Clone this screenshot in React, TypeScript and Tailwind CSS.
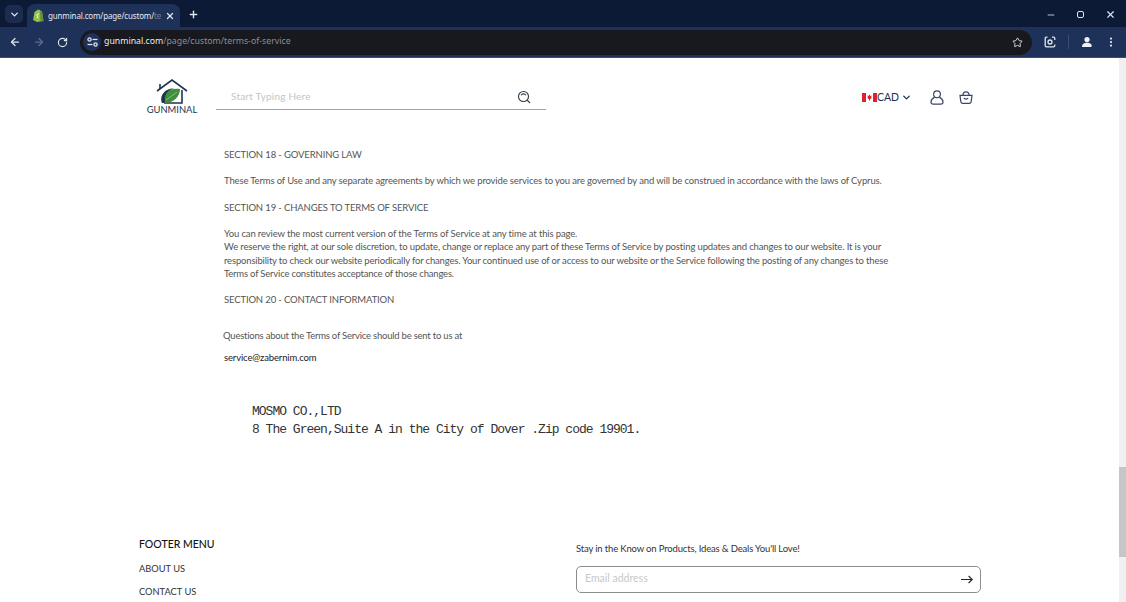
import React from 'react';
import { ArrowLeft, ArrowRight, ChevronDown, EllipsisVertical, Minus, Plus, RotateCw, Star, X } from 'lucide-react';

const body = { fontFamily: 'Lato, "Noto Sans", sans-serif' };
const ui = { fontFamily: '"Noto Sans", sans-serif' };

const ShopifyIcon = () => (
  <svg width="12" height="13" viewBox="0 0 12 13">
    <path d="M1 11 L2.5 3 Q5 1 6 0.5 Q8 0.5 9 2 L10 2.5 L11.5 12 L5 13 Z" fill="#95bf47" />
    <path d="M8 2.2 L10 2.5 L11.5 12 L8.5 12.6 Z" fill="#5e8e3e" />
    <path d="M7 5 Q5 4.6 4.8 6 Q5 7.4 6 7.8 Q6.4 9 4.6 8.8" stroke="#fff" strokeWidth="0.9" fill="none" />
  </svg>
);

const Logo = () => (
  <div className="flex flex-col items-center w-[52px]">
    <svg width="34" height="25" viewBox="0 0 34 25">
      <path d="M2 12 L17 1 L32 12" fill="none" stroke="#1d3550" strokeWidth="1.6" />
      <path d="M5 5 L5 10" stroke="#1d3550" strokeWidth="1.6" />
      <path d="M27 11 L27 24 L9 24" fill="none" stroke="#1d3550" strokeWidth="1.6" />
      <path d="M7 24 C4 14 13 9 25 10 C25 18 18 25 7 24 Z" fill="#3f8f3c" />
      <path d="M7 24 C4 14 13 9 19 9.6 C12 11 9 16 10 23.5 Z" fill="#1d3550" />
      <path d="M11 21 L22 13" stroke="#a6d08f" strokeWidth="0.7" />
    </svg>
    <span className="text-[9.4px] leading-[12px] text-[#1d3550]" style={body}>GUNMINAL</span>
  </div>
);

const CanadaFlag = () => (
  <svg width="15" height="9" viewBox="0 0 15 9">
    <rect width="15" height="9" fill="#fff" />
    <rect width="4" height="9" fill="#e0202a" />
    <rect x="11" width="4" height="9" fill="#e0202a" />
    <path d="M7.5 1.2 L8.3 3 L9.6 2.6 L9.1 4.4 L10 4.8 L8 6.2 L8 7.6 L7 7.6 L7 6.2 L5 4.8 L5.9 4.4 L5.4 2.6 L6.7 3 Z" fill="#e0202a" />
  </svg>
);

const SearchIcon = () => (
  <svg width="14" height="14" viewBox="0 0 14 14" fill="none" stroke="#2f3b44" strokeWidth="1.1" className="ml-auto">
    <circle cx="6.5" cy="6.5" r="5" />
    <path d="M10.2 10.2 L13 13" />
    <path d="M4 5.2 A3 3 0 0 1 9 5.2" />
  </svg>
);

const AccountIcon = () => (
  <svg width="14" height="15" viewBox="0 0 14 15" fill="none" stroke="#3c4668" strokeWidth="1.2">
    <circle cx="7" cy="4.2" r="3.4" />
    <path d="M4.5 7.4 C2.5 8.4 1 10 1 12 C1 13.4 2 14.2 3.2 14.2 H10.8 C12 14.2 13 13.4 13 12 C13 10 11.5 8.4 9.5 7.4" />
  </svg>
);

const BagIcon = () => (
  <svg width="14" height="13" viewBox="0 0 14 13" fill="none" stroke="#3c4668" strokeWidth="1.2">
    <path d="M1 4.4 H13 L12.2 10.6 C12 11.8 11.2 12.4 10.2 12.4 H3.8 C2.8 12.4 2 11.8 1.8 10.6 Z" />
    <path d="M3.8 4.4 C4 2 5 0.8 7 0.8 C9 0.8 10 2 10.2 4.4" />
    <path d="M5 7 C5.4 8.4 8.6 8.4 9 7" />
  </svg>
);

const BrowserChrome = () => (
  <div className="shrink-0">
    <div className="h-[27px] bg-[#0c1a36] flex items-end pl-[5px] text-[#dfe5ee]">
      <div className="w-[18px] h-[18px] mb-[4px] rounded-[5px] bg-[#1b2c50] flex items-center justify-center">
        <ChevronDown size={11} strokeWidth={3} />
      </div>
      <div className="ml-[4px] w-[153px] h-[23px] bg-[#1e3158] rounded-t-[8px] flex items-center pl-[5px]">
        <ShopifyIcon />
        <span className="ml-[4px] w-[114px] whitespace-nowrap text-[8px] tracking-[-0.15px] text-[#e6eaf1]" style={ui}>gunminal.com/page/custom/<span className="opacity-40">te</span></span>
        <X size={10} strokeWidth={3} className="ml-[3px]" />
      </div>
      <Plus size={11} strokeWidth={3} className="ml-[8px] mb-[7px]" />
      <div className="ml-auto flex items-center mb-[7px] pr-[10px] gap-[19px]">
        <Minus size={10} strokeWidth={2} />
        <div className="w-[10px] h-[10px] flex items-center justify-center">
          <div className="w-[7px] h-[7px] border-[1.5px] border-[#dfe5ee] rounded-[2px]" />
        </div>
        <X size={11} strokeWidth={2.5} className="ml-[1px]" />
      </div>
    </div>
    <div className="h-[31px] bg-[#1e3158] border-b border-[#3a4d72] flex items-center text-[#dfe5ee]">
      <ArrowLeft size={12} strokeWidth={2.5} className="ml-[9px]" />
      <ArrowRight size={12} strokeWidth={2.5} className="ml-[12px] text-[#5c6c8c]" />
      <RotateCw size={11} strokeWidth={2.5} className="ml-[12px]" />
      <div className="ml-[12px] w-[952px] h-[25px] bg-[#18191e] rounded-full flex items-center">
        <div className="ml-[3px] w-[18px] h-[18px] rounded-full bg-[#1e3158] flex items-center justify-center">
          <svg width="11" height="10" viewBox="0 0 11 10" fill="none" stroke="#dfe5ee" strokeWidth="1.3">
            <circle cx="2.5" cy="2.5" r="1.6" /><path d="M5.5 2.5H10.5" />
            <circle cx="8.5" cy="7.5" r="1.6" /><path d="M0.5 7.5H5.5" />
          </svg>
        </div>
        <span className="ml-[3px] text-[8.75px] whitespace-nowrap" style={ui}>
          <span className="text-[#e8ebf0]">gunminal.com</span><span className="text-[#8a8e96]">/page/custom/terms-of-service</span>
        </span>
        <Star size={11} strokeWidth={2} className="ml-auto mr-[9px]" />
      </div>
      <svg width="12" height="12" viewBox="0 0 12 12" fill="none" stroke="#dfe5ee" strokeWidth="1.3" className="ml-[12px]">
        <path d="M3.5 1.2 H2.5 C1.7 1.2 1.2 1.7 1.2 2.5 V9.5 C1.2 10.3 1.7 10.8 2.5 10.8 H9.5 C10.3 10.8 10.8 10.3 10.8 9.5 V8.5 M8 1.2 H9.5 C10.3 1.2 10.8 1.7 10.8 2.5 V4" />
        <circle cx="6" cy="6" r="2" />
      </svg>
      <div className="ml-[12px] w-[1px] h-[14px] bg-[#3a4d72]" />
      <div className="ml-[11px] w-[13px] h-[13px] rounded-full bg-[#1e3158] overflow-hidden flex items-center justify-center">
        <svg width="12" height="12" viewBox="0 0 12 12" fill="#eef1f5">
          <circle cx="6" cy="3.6" r="2.6" />
          <path d="M1 11 C1 8 3.2 6.8 6 6.8 C8.8 6.8 11 8 11 11 Z" />
        </svg>
      </div>
      <EllipsisVertical size={12} strokeWidth={2.5} className="ml-[12px]" />
    </div>
  </div>
);

const Header = () => (
  <div className="h-[72px] pl-[146px] pt-[21px] flex items-start shrink-0">
    <Logo />
    <div className="ml-[18px] mt-[3px] w-[330px] h-[28px] border-b-[1.5px] border-[#9fa7ae] flex items-center pl-[15px] pr-[15px] pt-[2px]">
      <span className="text-[10px] text-[#c3c5c7] tracking-[0.2px]" style={body}>Start Typing Here</span>
      <SearchIcon />
    </div>
    <div className="ml-[316px] mt-[9px] h-[18px] flex items-center text-[#23314f]">
      <CanadaFlag />
      <span className="text-[10.5px] pt-[1px]" style={body}>CAD</span>
      <ChevronDown size={11} strokeWidth={3} className="ml-[2px]" />
      <div className="ml-[18px]"><AccountIcon /></div>
      <div className="ml-[15px]"><BagIcon /></div>
    </div>
  </div>
);

const Terms = () => (
  <div className="pl-[224px] text-[9.5px] leading-[13.2px] tracking-[-0.14px] text-[#555] whitespace-nowrap shrink-0" style={body}>
    <p className="mt-[18px]">SECTION 18 - GOVERNING LAW</p>
    <p className="mt-[13.2px]">These Terms of Use and any separate agreements by which we provide services to you are governed by and will be construed in accordance with the laws of Cyprus.</p>
    <p className="mt-[13.2px]">SECTION 19 - CHANGES TO TERMS OF SERVICE</p>
    <p className="mt-[13.2px]">You can review the most current version of the Terms of Service at any time at this page.</p>
    <p>We reserve the right, at our sole discretion, to update, change or replace any part of these Terms of Service by posting updates and changes to our website. It is your</p>
    <p className="tracking-[-0.17px]">responsibility to check our website periodically for changes. Your continued use of or access to our website or the Service following the posting of any changes to these</p>
    <p className="tracking-[-0.2px]">Terms of Service constitutes acceptance of those changes.</p>
    <p className="mt-[13.2px]">SECTION 20 - CONTACT INFORMATION</p>
    <p className="mt-[23px] -ml-[1px] tracking-[-0.22px]">Questions about the Terms of Service should be sent to us at</p>
    <p className="mt-[8px] text-[#222]">service@zabernim.com</p>
    <div className="mt-[39px] ml-[28px] text-[13px] leading-[18px] tracking-[-0.99px] text-[#333]" style={{ fontFamily: '"Liberation Mono", monospace' }}>
      <p>MOSMO CO.,LTD</p>
      <p>8 The Green,Suite A in the City of Dover .Zip code 19901.</p>
    </div>
  </div>
);

const Footer = () => (
  <div className="mt-[97px] pl-[139px] flex items-start" style={body}>
    <div className="w-[437px]">
      <p className="text-[10.5px] leading-[16px] font-medium text-[#111]">FOOTER MENU</p>
      <p className="mt-[10px] text-[9.3px] leading-[14px] text-[#333]">ABOUT US</p>
      <p className="mt-[9px] text-[9.3px] leading-[14px] text-[#333]">CONTACT US</p>
    </div>
    <div className="w-[405px] mt-[6px]">
      <p className="text-[9.5px] leading-[14px] tracking-[-0.16px] text-[#333]">Stay in the Know on Products, Ideas &amp; Deals You'll Love!</p>
      <div className="mt-[10px] h-[27px] border border-[#8c8c8c] rounded-[5px] flex items-center pl-[8px] pr-[7px]">
        <span className="text-[10.5px] text-[#c8c8c8]">Email address</span>
        <svg width="12" height="9" viewBox="0 0 12 9" fill="none" stroke="#222" strokeWidth="1.1" className="ml-auto">
          <path d="M0 4.5 H11.2 M7.6 1 L11.2 4.5 L7.6 8" />
        </svg>
      </div>
    </div>
  </div>
);

const App = () => {
  return (
    <div className="w-[1126px] h-[602px] overflow-hidden bg-white flex flex-col">
      <BrowserChrome />
      <div className="flex flex-1 min-h-0">
        <div className="flex-1 flex flex-col overflow-hidden">
          <Header />
          <Terms />
          <Footer />
        </div>
        <div className="w-[7px] bg-[#f0f0f0] pt-[409px]">
          <div className="h-[90px] bg-[#c6c6c6]" />
        </div>
      </div>
    </div>
  );
};

export default App;
